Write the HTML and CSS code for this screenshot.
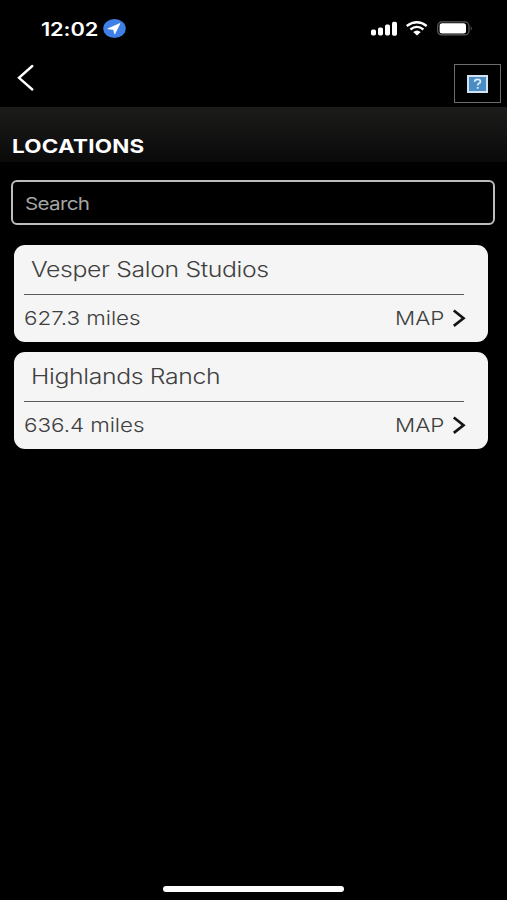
FILE: index.html
```html
<!DOCTYPE html>
<html lang="en">
<head>
  <meta charset="utf-8">
  <title>Locations</title>
  <link rel="stylesheet" href="styles.css">
</head>
<body>

<div class="statusbar">
  <div class="clock">
    <span class="wide time">12:02</span>
    <svg class="gps" width="24" height="20" viewBox="0 0 24 20">
      <ellipse cx="11.5" cy="9.5" rx="11.2" ry="9.5" fill="#3f7fe8"/>
      <path d="M17 4.4 L4.8 9.8 L10.6 10.5 L11.7 15.1 Z" fill="#fff" stroke="#fff" stroke-width=".7" stroke-linejoin="round"/>
    </svg>
  </div>
  <div class="indicators">
    <svg width="27" height="16" viewBox="0 0 27 16" fill="#fff">
      <rect x="0" y="8.5" width="5" height="6" rx="1.7"/>
      <rect x="7" y="6.5" width="5" height="8" rx="1.7"/>
      <rect x="14" y="3.5" width="5" height="11" rx="1.7"/>
      <rect x="21" y=".7" width="5" height="14" rx="1.7"/>
    </svg>
    <svg width="22" height="16" viewBox="0 0 22 16">
      <g fill="none" stroke="#fff" stroke-width="2.3">
        <path d="M.7 5 Q11 -2.4 20.7 5"/>
        <path d="M4.4 8.5 Q11 3.3 17.4 8.5"/>
      </g>
      <path d="M7.2 11 Q11 7.9 14.8 11 L11 14.6 Z" fill="#fff"/>
    </svg>
    <svg class="battery" width="37" height="16" viewBox="0 0 37 16">
      <rect x=".7" y=".9" width="31.3" height="13" rx="4" fill="none" stroke="#5c5c5c" stroke-width="1.2"/>
      <rect x="2.6" y="2.2" width="26.4" height="10.4" rx="2.5" fill="#fff"/>
      <path d="M33.7 5.2 Q36 7.4 33.7 9.6 Z" fill="#5c5c5c"/>
    </svg>
  </div>
</div>

<div class="navbar">
  <a class="back" href="#" aria-label="Back">
    <svg width="18" height="28" viewBox="0 0 18 28">
      <path d="M15.3 2 L2 13.8 L15.3 25.5" fill="none" stroke="#fff" stroke-width="2.4" stroke-linecap="round" stroke-linejoin="miter"/>
    </svg>
  </a>
  <div class="picture">
    <svg width="21" height="18" viewBox="0 0 21 18">
      <rect x="0" y="0" width="21" height="18" fill="#d3e3f3"/>
      <rect x="2" y="2" width="17" height="14" fill="#4a8cc4"/>
      <path d="M7.6 6.8 Q7.8 4.3 10.6 4.3 Q13.4 4.3 13.4 6.4 Q13.4 7.7 11.8 8.5 Q10.7 9.1 10.7 10.4 M10.7 12 V13.7" fill="none" stroke="#dcebf8" stroke-width="1.8"/>
    </svg>
  </div>
</div>

<div class="heading">
  <h1 class="wide">LOCATIONS</h1>
</div>

<div class="search"><span class="wide">Search</span></div>

<div class="locations">
  <div class="card">
    <div class="name"><span class="wide">Vesper Salon Studios</span></div>
    <div class="details">
      <span class="wide miles">627.3 miles</span>
      <a class="map" href="#">
        <span class="wide">MAP</span>
        <svg width="14" height="20" viewBox="0 0 14 20">
          <path d="M1.8 1.5 L11.5 9.3 L1.8 16.9" fill="none" stroke="#151515" stroke-width="2.7"/>
        </svg>
      </a>
    </div>
  </div>
  <div class="card">
    <div class="name"><span class="wide">Highlands Ranch</span></div>
    <div class="details">
      <span class="wide miles">636.4 miles</span>
      <a class="map" href="#">
        <span class="wide">MAP</span>
        <svg width="14" height="20" viewBox="0 0 14 20">
          <path d="M1.8 1.5 L11.5 9.3 L1.8 16.9" fill="none" stroke="#151515" stroke-width="2.7"/>
        </svg>
      </a>
    </div>
  </div>
</div>

<div class="home"></div>

</body>
</html>
```
FILE: styles.css
```css
* {box-sizing: border-box}

body {
  margin: 0;
  height: 900px;
  display: flex;
  flex-direction: column;
  background: #000;
  color: #fff;
  font-family: Inter, "Liberation Sans", sans-serif;
  overflow: hidden;
}

svg {
  display: block;
  flex: none;
}

a {
  color: inherit;
  text-decoration: none;
}

/* extended letter shapes */
.wide {
  display: inline-block;
  transform: scaleX(1.18);
  transform-origin: left center;
  white-space: nowrap;
}

.statusbar {
  height: 57px;
  padding: 0 33px 0 41px;
  display: flex;
  justify-content: space-between;
  align-items: center;
}

.clock {
  display: flex;
  align-items: center;
}

.time {
  width: 62px;
  font-size: 18.5px;
  font-weight: 600;
  letter-spacing: -0.1px;
}

.indicators {
  display: flex;
  gap: 8px;
}

.battery {
  margin-left: 1px;
}

.navbar {
  height: 50px;
  padding: 7px 6px 0 17px;
  display: flex;
  justify-content: space-between;
}

.picture {
  width: 47px;
  height: 39px;
  display: flex;
  justify-content: center;
  align-items: center;
  border: 1px solid #6c6c6c;
}

.heading {
  height: 55px;
  padding: 28px 12px 0;
  background: linear-gradient(#1c1c1b, #0a0a0a);
}

h1 {
  margin: 0;
  font-size: 19px;
  line-height: 24px;
  font-weight: 650;
  letter-spacing: 0.2px;
}

.search {
  height: 45px;
  margin: 18px 12px 0 10.5px;
  padding: 0 12px;
  border: 2px solid #bdbdbd;
  border-radius: 6px;
  color: #a5a5a5;
  font-size: 17.5px;
  line-height: 43px;
  letter-spacing: -0.6px;
}

.locations {
  padding: 20px 19px 0 13.5px;
  display: flex;
  flex-direction: column;
  gap: 10.4px;
}

.card {
  height: 97px;
  padding: 0 24px 0 10.5px;
  border-radius: 11px;
  background: #f5f5f5;
  color: #404040;
}

.name {
  height: 50px;
  padding-left: 7px;
  border-bottom: 1px solid #5a5a5a;
  font-size: 21px;
  line-height: 49px;
  font-weight: 300;
  letter-spacing: -0.3px;
}

.details {
  height: 47px;
  display: flex;
  justify-content: space-between;
  align-items: center;
  font-size: 19px;
  font-weight: 300;
  letter-spacing: -0.05px;
}

.map {
  width: 69px;
  display: flex;
  gap: 15px;
  align-items: center;
}

.home {
  width: 181px;
  height: 6px;
  margin: auto auto 8px;
  border-radius: 3px;
  background: #fff;
}
```
